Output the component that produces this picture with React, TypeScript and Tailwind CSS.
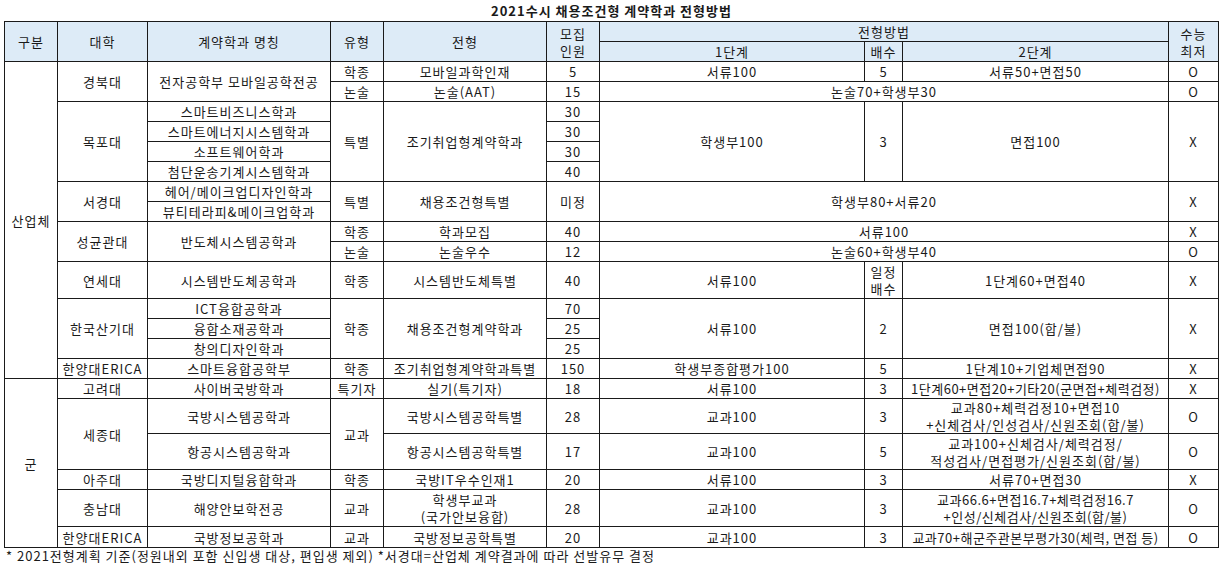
import { ReactNode } from "react";

type CellProps = {
  children?: ReactNode;
  rs?: number;
  cs?: number;
  head?: boolean;
  tight?: boolean;
};

const Cell = ({ children, rs, cs, head, tight }: CellProps) => (
  <td
    rowSpan={rs}
    colSpan={cs}
    className={`border border-[#1a1a1a] p-0 text-center align-middle whitespace-nowrap leading-[17px] ${
      head ? "bg-[#ddebf7]" : "bg-white"
    } ${tight ? "tracking-[0.5px]" : ""}`}
  >
    {children}
  </td>
);

const widths = [53, 90, 183, 53, 163, 53, 265, 38, 266, 50];

export default function App() {
  return (
    <div
      className="w-[1228px] h-[565px] bg-white pl-[4px] text-[13px] tracking-[1px] text-[#1a1a1a]"
      style={{ fontFamily: '"Noto Sans CJK KR", "Noto Sans", sans-serif' }}
    >
      <div className="w-[1215px] h-[21px] text-center font-bold leading-[21px]">
        2021수시 채용조건형 계약학과 전형방법
      </div>
      <table className="w-[1215px] table-fixed border-collapse">
        <colgroup>
          {widths.map((w, i) => (
            <col key={i} style={{ width: w }} />
          ))}
        </colgroup>
        <tbody>
          <tr className="h-[20px]">
            <Cell head rs={2}>구분</Cell>
            <Cell head rs={2}>대학</Cell>
            <Cell head rs={2}>계약학과 명칭</Cell>
            <Cell head rs={2}>유형</Cell>
            <Cell head rs={2}>전형</Cell>
            <Cell head rs={2}>
              모집
              <br />
              인원
            </Cell>
            <Cell head cs={3}>전형방법</Cell>
            <Cell head rs={2}>
              수능
              <br />
              최저
            </Cell>
          </tr>
          <tr className="h-[20px]">
            <Cell head>1단계</Cell>
            <Cell head>배수</Cell>
            <Cell head>2단계</Cell>
          </tr>

          {/* 산업체 */}
          <tr className="h-[20px]">
            <Cell rs={15}>산업체</Cell>
            <Cell rs={2}>경북대</Cell>
            <Cell rs={2}>전자공학부 모바일공학전공</Cell>
            <Cell>학종</Cell>
            <Cell>모바일과학인재</Cell>
            <Cell>5</Cell>
            <Cell>서류100</Cell>
            <Cell>5</Cell>
            <Cell>서류50+면접50</Cell>
            <Cell>O</Cell>
          </tr>
          <tr className="h-[20px]">
            <Cell>논술</Cell>
            <Cell>논술(AAT)</Cell>
            <Cell>15</Cell>
            <Cell cs={3}>논술70+학생부30</Cell>
            <Cell>O</Cell>
          </tr>
          <tr className="h-[20px]">
            <Cell rs={4}>목포대</Cell>
            <Cell>스마트비즈니스학과</Cell>
            <Cell rs={4}>특별</Cell>
            <Cell rs={4}>조기취업형계약학과</Cell>
            <Cell>30</Cell>
            <Cell rs={4}>학생부100</Cell>
            <Cell rs={4}>3</Cell>
            <Cell rs={4}>면접100</Cell>
            <Cell rs={4}>X</Cell>
          </tr>
          <tr className="h-[20px]">
            <Cell>스마트에너지시스템학과</Cell>
            <Cell>30</Cell>
          </tr>
          <tr className="h-[20px]">
            <Cell>소프트웨어학과</Cell>
            <Cell>30</Cell>
          </tr>
          <tr className="h-[20px]">
            <Cell>첨단운송기계시스템학과</Cell>
            <Cell>40</Cell>
          </tr>
          <tr className="h-[20px]">
            <Cell rs={2}>서경대</Cell>
            <Cell>헤어/메이크업디자인학과</Cell>
            <Cell rs={2}>특별</Cell>
            <Cell rs={2}>채용조건형특별</Cell>
            <Cell rs={2}>미정</Cell>
            <Cell rs={2} cs={3}>
              학생부80+서류20
            </Cell>
            <Cell rs={2}>X</Cell>
          </tr>
          <tr className="h-[20px]">
            <Cell>뷰티테라피&amp;메이크업학과</Cell>
          </tr>
          <tr className="h-[20px]">
            <Cell rs={2}>성균관대</Cell>
            <Cell rs={2}>반도체시스템공학과</Cell>
            <Cell>학종</Cell>
            <Cell>학과모집</Cell>
            <Cell>40</Cell>
            <Cell cs={3}>서류100</Cell>
            <Cell>X</Cell>
          </tr>
          <tr className="h-[20px]">
            <Cell>논술</Cell>
            <Cell>논술우수</Cell>
            <Cell>12</Cell>
            <Cell cs={3}>논술60+학생부40</Cell>
            <Cell>O</Cell>
          </tr>
          <tr className="h-[37px]">
            <Cell>연세대</Cell>
            <Cell>시스템반도체공학과</Cell>
            <Cell>학종</Cell>
            <Cell>시스템반도체특별</Cell>
            <Cell>40</Cell>
            <Cell>서류100</Cell>
            <Cell>
              일정
              <br />
              배수
            </Cell>
            <Cell>1단계60+면접40</Cell>
            <Cell>X</Cell>
          </tr>
          <tr className="h-[20px]">
            <Cell rs={3}>한국산기대</Cell>
            <Cell>ICT융합공학과</Cell>
            <Cell rs={3}>학종</Cell>
            <Cell rs={3}>채용조건형계약학과</Cell>
            <Cell>70</Cell>
            <Cell rs={3}>서류100</Cell>
            <Cell rs={3}>2</Cell>
            <Cell rs={3}>면접100(합/불)</Cell>
            <Cell rs={3}>X</Cell>
          </tr>
          <tr className="h-[20px]">
            <Cell>융합소재공학과</Cell>
            <Cell>25</Cell>
          </tr>
          <tr className="h-[20px]">
            <Cell>창의디자인학과</Cell>
            <Cell>25</Cell>
          </tr>
          <tr className="h-[20px]">
            <Cell>한양대ERICA</Cell>
            <Cell>스마트융합공학부</Cell>
            <Cell>학종</Cell>
            <Cell>조기취업형계약학과특별</Cell>
            <Cell>150</Cell>
            <Cell>학생부종합평가100</Cell>
            <Cell>5</Cell>
            <Cell>1단계10+기업체면접90</Cell>
            <Cell>X</Cell>
          </tr>

          {/* 군 */}
          <tr className="h-[20px]">
            <Cell rs={6}>군</Cell>
            <Cell>고려대</Cell>
            <Cell>사이버국방학과</Cell>
            <Cell>특기자</Cell>
            <Cell>실기(특기자)</Cell>
            <Cell>18</Cell>
            <Cell>서류100</Cell>
            <Cell>3</Cell>
            <Cell tight>1단계60+면접20+기타20(군면접+체력검정)</Cell>
            <Cell>X</Cell>
          </tr>
          <tr className="h-[35px]">
            <Cell rs={2}>세종대</Cell>
            <Cell>국방시스템공학과</Cell>
            <Cell rs={2}>교과</Cell>
            <Cell>국방시스템공학특별</Cell>
            <Cell>28</Cell>
            <Cell>교과100</Cell>
            <Cell>3</Cell>
            <Cell>
              교과80+체력검정10+면접10
              <br />
              +신체검사/인성검사/신원조회(합/불)
            </Cell>
            <Cell>O</Cell>
          </tr>
          <tr className="h-[36px]">
            <Cell>항공시스템공학과</Cell>
            <Cell>항공시스템공학특별</Cell>
            <Cell>17</Cell>
            <Cell>교과100</Cell>
            <Cell>5</Cell>
            <Cell>
              교과100+신체검사/체력검정/
              <br />
              적성검사/면접평가/신원조회(합/불)
            </Cell>
            <Cell>O</Cell>
          </tr>
          <tr className="h-[20px]">
            <Cell>아주대</Cell>
            <Cell>국방디지털융합학과</Cell>
            <Cell>학종</Cell>
            <Cell>국방IT우수인재1</Cell>
            <Cell>20</Cell>
            <Cell>서류100</Cell>
            <Cell>3</Cell>
            <Cell>서류70+면접30</Cell>
            <Cell>X</Cell>
          </tr>
          <tr className="h-[37px]">
            <Cell>충남대</Cell>
            <Cell>해양안보학전공</Cell>
            <Cell>교과</Cell>
            <Cell>
              학생부교과
              <br />
              (국가안보융합)
            </Cell>
            <Cell>28</Cell>
            <Cell>교과100</Cell>
            <Cell>3</Cell>
            <Cell tight>
              교과66.6+면접16.7+체력검정16.7
              <br />
              +인성/신체검사/신원조회(합/불)
            </Cell>
            <Cell>O</Cell>
          </tr>
          <tr className="h-[21px]">
            <Cell>한양대ERICA</Cell>
            <Cell>국방정보공학과</Cell>
            <Cell>교과</Cell>
            <Cell>국방정보공학특별</Cell>
            <Cell>20</Cell>
            <Cell>교과100</Cell>
            <Cell>3</Cell>
            <Cell tight>교과70+해군주관본부평가30(체력, 면접 등)</Cell>
            <Cell>O</Cell>
          </tr>
        </tbody>
      </table>
      <div className="pl-[2px] leading-[16px]">
        * 2021전형계획 기준(정원내외 포함 신입생 대상, 편입생 제외) *서경대=산업체 계약결과에 따라 선발유무 결정
      </div>
    </div>
  );
}
